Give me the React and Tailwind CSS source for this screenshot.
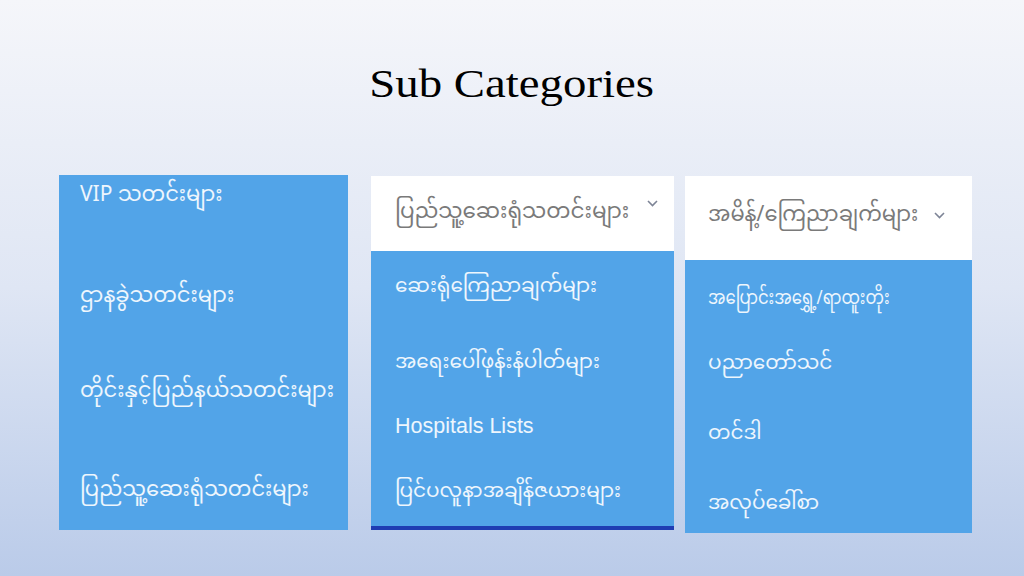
const mm = { fontFamily: '"Noto Sans Myanmar", "Padauk", "Myanmar Text", "Noto Sans", "Liberation Sans", sans-serif' };
const latin = { fontFamily: '"Liberation Sans", Arial, sans-serif' };

const newsItems = [
  { text: 'VIP သတင်းများ', mt: 'mt-[4px]' },
  { text: 'ဌာနခွဲသတင်းများ', mt: 'mt-[65px]' },
  { text: 'တိုင်းနှင့်ပြည်နယ်သတင်းများ', mt: 'mt-[59px]' },
  { text: 'ပြည်သူ့ဆေးရုံသတင်းများ', mt: 'mt-[63px]' },
];

const hospitalItems = [
  { text: 'ဆေးရုံကြေညာချက်များ', mt: 'mt-[19px]' },
  { text: 'အရေးပေါ်ဖုန်းနံပါတ်များ', mt: 'mt-[40px]' },
  { text: 'Hospitals Lists', mt: 'mt-[26px]', latin: true },
  { text: 'ပြင်ပလူနာအချိန်ဇယားများ', mt: 'mt-[31px]' },
];

const orderItems = [
  { text: 'အပြောင်းအရွှေ့/ရာထူးတိုး', mt: 'mt-[22px]', tight: true },
  { text: 'ပညာတော်သင်', mt: 'mt-[29px]' },
  { text: 'တင်ဒါ', mt: 'mt-[34px]' },
  { text: 'အလုပ်ခေါ်စာ', mt: 'mt-[34px]' },
];

function Chevron({ className }) {
  return (
    <svg width="11" height="7" viewBox="0 0 11 7" fill="none" className={`shrink-0 ${className}`}>
      <path d="M1 1l4.5 4.5L10 1" stroke="#7d8496" strokeWidth="1.6" />
    </svg>
  );
}

function Item({ item, size = 'text-[20px]' }) {
  return (
    <div
      className={`h-[36px] shrink-0 flex items-center text-white/90 ${item.latin ? 'text-[21.5px]' : size} ${item.mt}`}
      style={item.latin ? latin : mm}
    >
      <span className={item.tight ? 'inline-block origin-left scale-x-[0.82]' : ''}>{item.text}</span>
    </div>
  );
}

export default function App() {
  return (
    <div className="w-[1024px] h-[576px] overflow-hidden bg-gradient-to-b from-[#f5f6fa] via-[#dfe6f4] to-[#bacbe9] flex flex-col">
      <div className="flex justify-center mt-[64px]">
        <h1
          className="inline-block text-[40px] leading-none text-black scale-x-[1.17]"
          style={{ fontFamily: '"Liberation Serif", "Times New Roman", serif' }}
        >
          Sub Categories
        </h1>
      </div>

      <div className="flex items-start pl-[59px] mt-[71px]">
        {/* news */}
        <div className="w-[289px] h-[355px] bg-[#52a4e8] pl-[21px] flex flex-col">
          {newsItems.map((item) => (
            <Item key={item.text} item={item} size="text-[21px]" />
          ))}
        </div>

        {/* hospitals dropdown */}
        <div className="ml-[23px] mt-[1px] w-[303px] flex flex-col">
          <div className="h-[75px] bg-white pl-6 pr-4 flex items-center justify-between">
            <span className="text-[21.5px] text-[#7a7a7a]" style={mm}>ပြည်သူ့ဆေးရုံသတင်းများ</span>
            <Chevron className="-mt-[20px]" />
          </div>
          <div className="h-[275px] bg-[#52a4e8] pl-6 flex flex-col">
            {hospitalItems.map((item) => (
              <Item key={item.text} item={item} />
            ))}
          </div>
          <div className="h-[4px] bg-[#1f3db3]" />
        </div>

        {/* orders dropdown */}
        <div className="ml-[11px] mt-[1px] w-[287px] flex flex-col">
          <div className="h-[84px] bg-white pl-[23px] pr-[27px] flex items-center justify-between">
            <span className="text-[21px] text-[#7a7a7a] -mt-[2px]" style={mm}>အမိန့်/ကြေညာချက်များ</span>
            <Chevron className="-mt-[6px]" />
          </div>
          <div className="h-[273px] bg-[#52a4e8] pl-[23px] flex flex-col">
            {orderItems.map((item) => (
              <Item key={item.text} item={item} />
            ))}
          </div>
        </div>
      </div>
    </div>
  );
}
